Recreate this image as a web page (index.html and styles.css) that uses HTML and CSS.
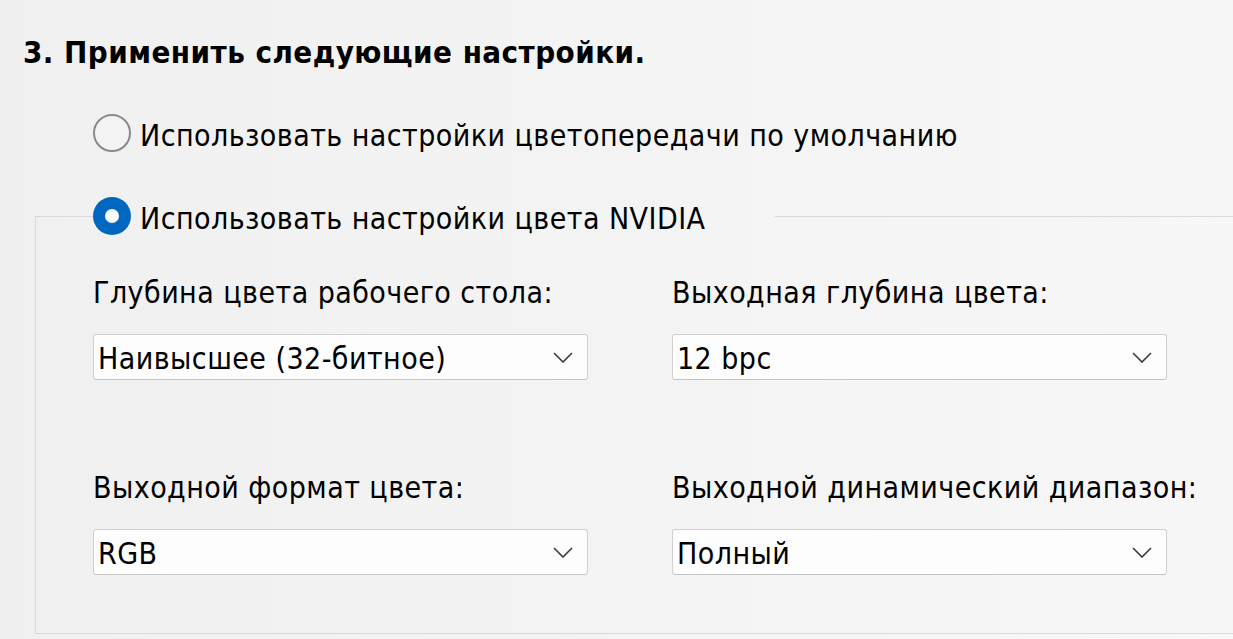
FILE: index.html
```html
<!DOCTYPE html>
<html>
<head>
    <title>Настройки цвета</title>
    <link rel="stylesheet" href="styles.css">
</head>
<body>
    <div class="page">
        <h1 class="step-title">3. Применить следующие настройки.</h1>

        <div class="radio-row">
            <span class="radio"></span>
            <span class="radio-text">Использовать настройки цветопередачи по умолчанию</span>
        </div>

        <fieldset class="group">
            <legend class="radio-row legend-row">
                <span class="radio checked"></span>
                <span class="radio-text">Использовать настройки цвета NVIDIA</span>
            </legend>

            <div class="settings">
                <div class="field">
                    <div class="field-label">Глубина цвета рабочего стола:</div>
                    <div class="combo">
                        <span class="combo-value">Наивысшее (32-битное)</span>
                        <svg class="chevron" width="20" height="11" viewBox="0 0 20 11"><polyline points="1,1 10,10 19,1" /></svg>
                    </div>
                </div>
                <div class="field">
                    <div class="field-label">Выходная глубина цвета:</div>
                    <div class="combo">
                        <span class="combo-value">12 bpc</span>
                        <svg class="chevron" width="20" height="11" viewBox="0 0 20 11"><polyline points="1,1 10,10 19,1" /></svg>
                    </div>
                </div>
                <div class="field">
                    <div class="field-label">Выходной формат цвета:</div>
                    <div class="combo">
                        <span class="combo-value">RGB</span>
                        <svg class="chevron" width="20" height="11" viewBox="0 0 20 11"><polyline points="1,1 10,10 19,1" /></svg>
                    </div>
                </div>
                <div class="field">
                    <div class="field-label">Выходной динамический диапазон:</div>
                    <div class="combo">
                        <span class="combo-value">Полный</span>
                        <svg class="chevron" width="20" height="11" viewBox="0 0 20 11"><polyline points="1,1 10,10 19,1" /></svg>
                    </div>
                </div>
            </div>
        </fieldset>
    </div>
</body>
</html>
```

FILE: styles.css
```css
html, body {
    margin: 0;
    height: 100%;
    overflow: hidden;
}

body {
    font-family: 'DejaVu Sans Condensed', 'DejaVu Sans', sans-serif;
    font-size: 30px;
    letter-spacing: 0.45px;
    color: #000;
    background: linear-gradient(to right, #f0f0f0, #f7f7f7);
}

.page {
    padding-top: 34px;
}

.step-title {
    margin: 0 0 0 23px;
    font-size: 31px;
    line-height: 36px;
    font-weight: bold;
    letter-spacing: 0.45px;
}

.radio-row {
    display: flex;
    align-items: flex-start;
    margin: 44px 0 0 93px;
    height: 38px;
}

.radio {
    box-sizing: border-box;
    width: 38px;
    height: 38px;
    border: 2px solid #8a8a8a;
    border-radius: 50%;
    background-color: #f3f3f3;
    flex-shrink: 0;
    position: relative;
}

    .radio.checked {
        border: none;
        background-color: #0067c0;
    }

        .radio.checked::after {
            content: '';
            position: absolute;
            left: 12px;
            top: 12px;
            width: 14px;
            height: 14px;
            border-radius: 50%;
            background-color: #fff;
        }

.radio-text {
    margin: 7px 0 0 9px;
    line-height: 30px;
    white-space: nowrap;
}

.group {
    margin: 45px -40px 0 35px;
    padding: 43px 0 58px 57px;
    border: 1px solid #d9d9d9;
    min-width: 0;
}

.legend-row {
    margin: 0;
    padding: 0 70px 0 0;
}

.settings {
    display: grid;
    grid-template-columns: 495px 495px;
    column-gap: 84px;
    row-gap: 93px;
}

.field-label {
    line-height: 30px;
    margin-bottom: 26px;
    white-space: nowrap;
}

.combo {
    box-sizing: border-box;
    height: 46px;
    display: flex;
    align-items: center;
    justify-content: space-between;
    padding: 4px 14px 0 4px;
    background-color: #fdfdfd;
    border: 1px solid #d0d0d0;
    border-bottom-color: #c4c4c4;
    border-radius: 3px;
}

.combo-value {
    line-height: 30px;
}

.chevron {
    margin-top: -3px;
}

    .chevron polyline {
        fill: none;
        stroke: #3a3a3a;
        stroke-width: 1.6;
    }
```
